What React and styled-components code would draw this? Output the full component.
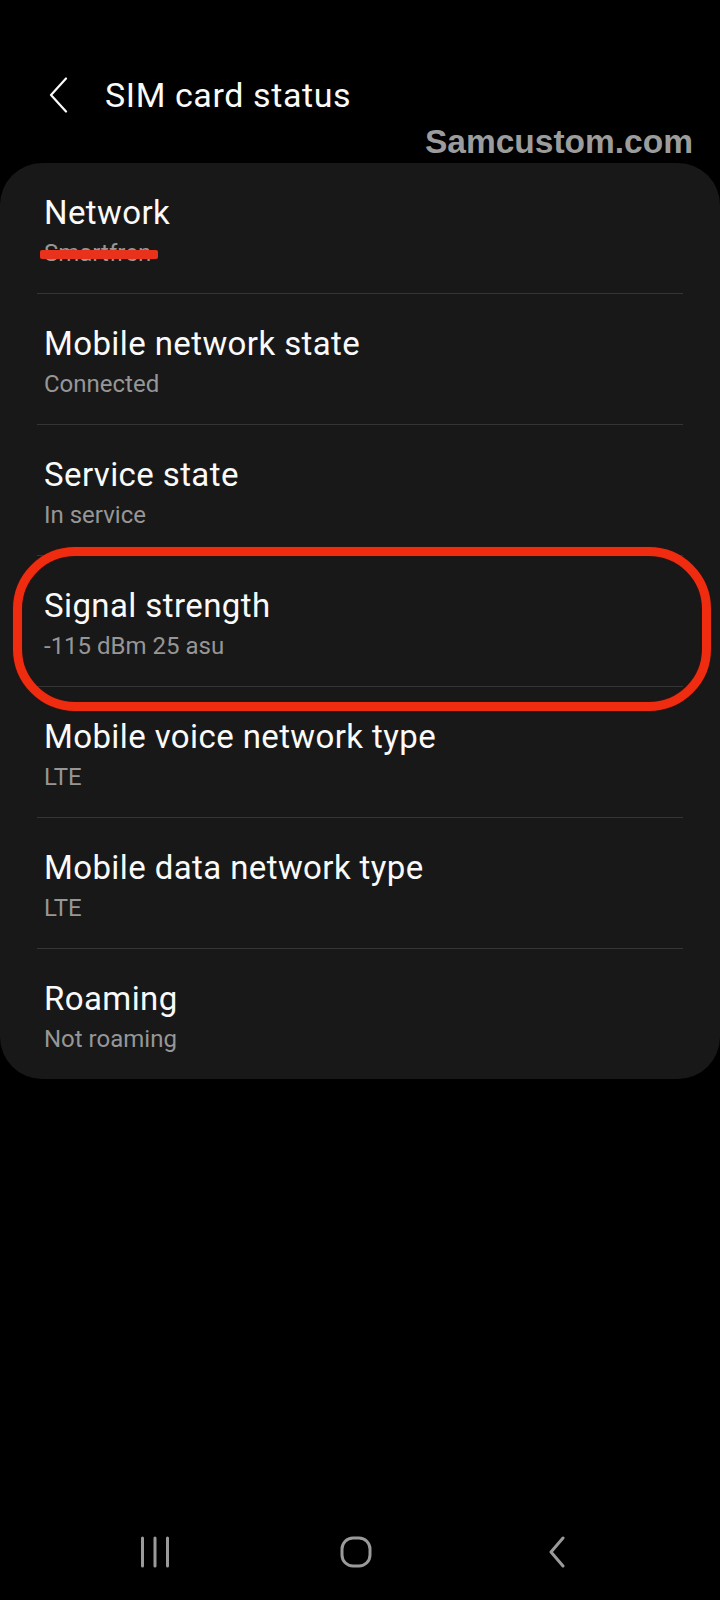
import styled, { createGlobalStyle } from "styled-components"

const GlobalStyle = createGlobalStyle`
  body {
    margin: 0;
    background: #000;
    font-family: Roboto, "Noto Sans", sans-serif;
  }
`

const rows = [
  { title: "Network", value: "Smartfren", redacted: true },
  { title: "Mobile network state", value: "Connected" },
  { title: "Service state", value: "In service" },
  { title: "Signal strength", value: "-115 dBm 25 asu", highlighted: true },
  { title: "Mobile voice network type", value: "LTE" },
  { title: "Mobile data network type", value: "LTE" },
  { title: "Roaming", value: "Not roaming" },
]

export default function App() {
  return (
    <Page>
      <GlobalStyle />
      <Header>
        <BackIcon width="19" height="36" viewBox="0 0 19 36">
          <path d="M17 1.5 L2 18 L17 34.5" fill="none" stroke="#fafafa" strokeWidth="2.2" strokeLinecap="round" strokeLinejoin="round" />
        </BackIcon>
        <Title>SIM card status</Title>
      </Header>

      <Watermark>Samcustom.com</Watermark>

      <Card>
        {rows.map((row, index) => (
          <div key={row.title}>
            {index > 0 && <Divider />}
            <Row>
              <RowTitle>{row.title}</RowTitle>
              <RowValue>
                {row.value}
                {row.redacted && <Strike />}
              </RowValue>
              {row.highlighted && <Ring />}
            </Row>
          </div>
        ))}
      </Card>

      <NavBar>
        <NavSlot>
          <svg width="30" height="32" viewBox="0 0 30 32">
            <path d="M2.5 2 V30 M15 2 V30 M27.5 2 V30" stroke="#9a9a9a" strokeWidth="3" strokeLinecap="round" />
          </svg>
        </NavSlot>
        <NavSlot>
          <svg width="32" height="32" viewBox="0 0 32 32">
            <rect x="2" y="2" width="28" height="28" rx="11" fill="none" stroke="#9a9a9a" strokeWidth="3" />
          </svg>
        </NavSlot>
        <NavSlot>
          <svg width="20" height="32" viewBox="0 0 20 32">
            <path d="M16 2 L4 16 L16 30" fill="none" stroke="#9a9a9a" strokeWidth="3" strokeLinecap="round" strokeLinejoin="round" />
          </svg>
        </NavSlot>
      </NavBar>
    </Page>
  )
}

const Page = styled.div`
  position: relative;
  min-height: 1600px;
  display: flex;
  flex-direction: column;
  background: #000;
`

const Header = styled.header`
  display: flex;
  align-items: center;
  gap: 37px;
  height: 40px;
  margin-top: 75px;
  padding-left: 49px;
`

const BackIcon = styled.svg`
  flex-shrink: 0;
`

const Title = styled.h1`
  margin: 0;
  font-size: 34px;
  line-height: 40px;
  font-weight: 400;
  letter-spacing: 0.6px;
  color: #fafafa;
`

const Watermark = styled.div`
  position: absolute;
  top: 125px;
  right: 27px;
  font-family: "Liberation Sans", Arial, sans-serif;
  font-weight: 700;
  font-size: 33.5px;
  line-height: 33.5px;
  color: #9c9c9c;
`

const Card = styled.section`
  margin-top: 48px;
  background: #181818;
  border-radius: 42px;
`

const Divider = styled.div`
  height: 1px;
  margin: 0 37px;
  background: #353535;
`

const Row = styled.div`
  position: relative;
  padding: 30px 44px 24px;
`

const RowTitle = styled.div`
  font-size: 33px;
  line-height: 40px;
  letter-spacing: 0.4px;
  color: #fafafa;
`

const RowValue = styled.div`
  position: relative;
  margin-top: 4px;
  font-size: 24px;
  line-height: 32px;
  color: #969696;
`

const Strike = styled.span`
  position: absolute;
  left: -4px;
  top: 13px;
  width: 118px;
  height: 9px;
  border-radius: 2px;
  background: #e8321b;
`

const Ring = styled.div`
  position: absolute;
  z-index: 2;
  top: -9px;
  left: 13px;
  right: 9px;
  bottom: -25px;
  border: 9px solid #f02c10;
  border-radius: 62px;
  box-shadow: 0 0 2px rgba(110, 10, 0, 0.8), inset 0 0 2px rgba(110, 10, 0, 0.8);
  pointer-events: none;
`

const NavBar = styled.nav`
  margin-top: auto;
  height: 96px;
  display: flex;
  justify-content: center;
  align-items: center;
  padding-right: 8px;
`

const NavSlot = styled.div`
  width: 201px;
  display: flex;
  justify-content: center;
`
